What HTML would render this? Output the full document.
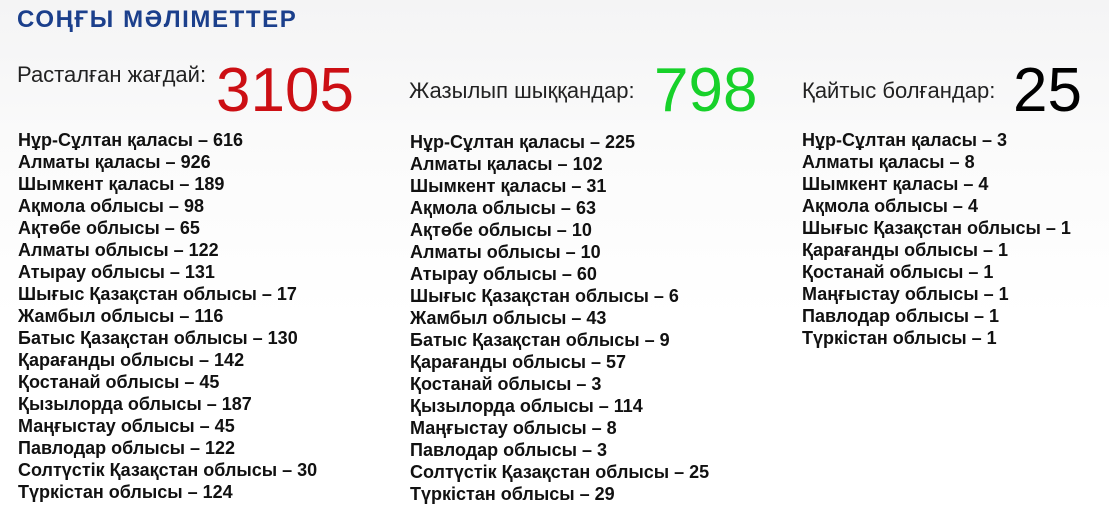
<!DOCTYPE html>
<html><head><meta charset="utf-8"><style>
html,body{margin:0;padding:0}
body{width:1109px;height:529px;overflow:hidden;position:relative;background:linear-gradient(180deg,#f4f4f5 0%,#fbfbfb 30%,#fff 60%);font-family:"Liberation Sans",sans-serif;color:#111}
.t{position:absolute;left:17px;top:6px;font-size:24px;font-weight:bold;color:#1b3f8c;letter-spacing:1.6px}
.h{position:absolute;font-size:22px;color:#222}
.n{position:absolute;font-size:62px;line-height:1}
.c{position:absolute;font-weight:bold;font-size:18px;line-height:22px;white-space:nowrap}
</style></head><body>
<div class="t">СОҢҒЫ МӘЛІМЕТТЕР</div>
<div class="h" style="left:17px;top:62px">Расталған жағдай:</div>
<div class="n" style="left:216px;top:60px;color:#cc0f14">3105</div>
<div class="h" style="left:409px;top:78px">Жазылып шыққандар:</div>
<div class="n" style="left:654px;top:60px;color:#17d12a">798</div>
<div class="h" style="left:802px;top:78px">Қайтыс болғандар:</div>
<div class="n" style="left:1013px;top:60px;color:#000">25</div>
<div class="c" style="left:18px;top:129px">Нұр-Сұлтан қаласы – 616<br>Алматы қаласы – 926<br>Шымкент қаласы – 189<br>Ақмола облысы – 98<br>Ақтөбе облысы – 65<br>Алматы облысы – 122<br>Атырау облысы – 131<br>Шығыс Қазақстан облысы – 17<br>Жамбыл облысы – 116<br>Батыс Қазақстан облысы – 130<br>Қарағанды облысы – 142<br>Қостанай облысы – 45<br>Қызылорда облысы – 187<br>Маңғыстау облысы – 45<br>Павлодар облысы – 122<br>Солтүстік Қазақстан облысы – 30<br>Түркістан облысы – 124</div>
<div class="c" style="left:410px;top:131px">Нұр-Сұлтан қаласы – 225<br>Алматы қаласы – 102<br>Шымкент қаласы – 31<br>Ақмола облысы – 63<br>Ақтөбе облысы – 10<br>Алматы облысы – 10<br>Атырау облысы – 60<br>Шығыс Қазақстан облысы – 6<br>Жамбыл облысы – 43<br>Батыс Қазақстан облысы – 9<br>Қарағанды облысы – 57<br>Қостанай облысы – 3<br>Қызылорда облысы – 114<br>Маңғыстау облысы – 8<br>Павлодар облысы – 3<br>Солтүстік Қазақстан облысы – 25<br>Түркістан облысы – 29</div>
<div class="c" style="left:802px;top:129px">Нұр-Сұлтан қаласы – 3<br>Алматы қаласы – 8<br>Шымкент қаласы – 4<br>Ақмола облысы – 4<br>Шығыс Қазақстан облысы – 1<br>Қарағанды облысы – 1<br>Қостанай облысы – 1<br>Маңғыстау облысы – 1<br>Павлодар облысы – 1<br>Түркістан облысы – 1</div>
</body></html>
